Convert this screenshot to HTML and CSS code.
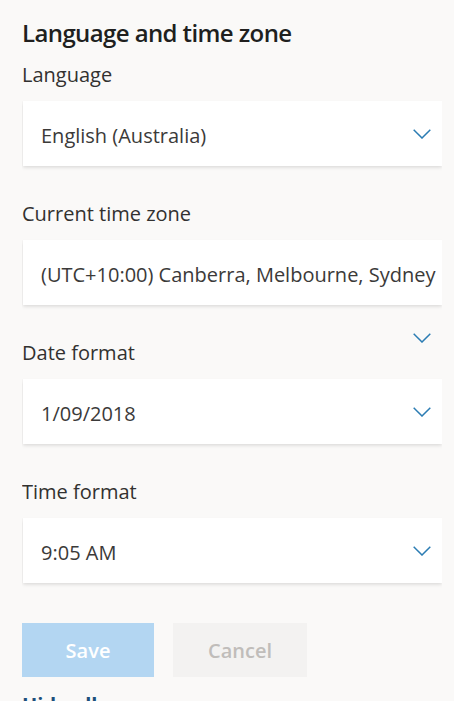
FILE: index.html
```html
<!DOCTYPE html>
<html lang="en">
<head>
<meta charset="utf-8">
<title>Language and time zone</title>
<link rel="stylesheet" href="styles.css">
</head>
<body>
<main class="panel">
  <h2 class="title">Language and time zone</h2>

  <section class="field">
    <div class="label">Language</div>
    <div class="select">
      <span class="value">English (Australia)</span>
      <span class="chev"><svg viewBox="0 0 18 10" width="18" height="10"><polyline points="0.7,0.7 9,9 17.3,0.7"/></svg></span>
    </div>
  </section>

  <section class="field">
    <div class="label">Current time zone</div>
    <div class="select">
      <span class="value">(UTC+10:00) Canberra, Melbourne, Sydney</span>
      <span class="chev"><svg viewBox="0 0 18 10" width="18" height="10"><polyline points="0.7,0.7 9,9 17.3,0.7"/></svg></span>
    </div>
  </section>

  <section class="field">
    <div class="label">Date format</div>
    <div class="select">
      <span class="value">1/09/2018</span>
      <span class="chev"><svg viewBox="0 0 18 10" width="18" height="10"><polyline points="0.7,0.7 9,9 17.3,0.7"/></svg></span>
    </div>
  </section>

  <section class="field">
    <div class="label">Time format</div>
    <div class="select">
      <span class="value">9:05 AM</span>
      <span class="chev"><svg viewBox="0 0 18 10" width="18" height="10"><polyline points="0.7,0.7 9,9 17.3,0.7"/></svg></span>
    </div>
  </section>

  <div class="actions">
    <button class="btn btn-save" type="button">Save</button>
    <button class="btn btn-cancel" type="button">Cancel</button>
  </div>

  <div class="next">Hide all</div>
</main>
</body>
</html>
```

FILE: styles.css
```css
html, body {
  margin: 0;
  padding: 0;
  background: #faf9f8;
}

body {
  font-family: "Open Sans", "Noto Sans", sans-serif;
  color: #323130;
  height: 701px;
  overflow: hidden;
}

.panel {
  margin-left: 22px;
  width: 420px;
  padding-top: 17px;
  overflow: hidden;
}

.title {
  margin: 0;
  font-size: 24px;
  line-height: 32px;
  font-weight: 600;
  letter-spacing: -0.6px;
  color: #201f1e;
}

.field {
  margin-top: 12px;
}

.field + .field {
  margin-top: 34px;
}

.label {
  font-size: 20px;
  line-height: 28px;
  margin-bottom: 12px;
  color: #323130;
}

.select {
  margin-left: 1px;
  height: 65px;
  background: #fff;
  box-shadow: 0 1.6px 3.6px 0 rgba(0, 0, 0, 0.132), 0 0.3px 0.9px 0 rgba(0, 0, 0, 0.108);
  display: flex;
  flex-wrap: wrap;
  align-content: flex-start;
}

.value {
  flex: none;
  white-space: nowrap;
  height: 61px;
  padding-top: 4px;
  padding-left: 18px;
  font-size: 20px;
  line-height: 61px;
  color: #3b3a39;
}

.chev {
  flex: none;
  margin-left: auto;
  height: 65px;
  padding: 0 11px 0 10px;
  display: flex;
  align-items: center;
}

.chev svg {
  display: block;
  fill: none;
  stroke: #2b7cb3;
  stroke-width: 1.5;
}

.actions {
  margin-top: 40px;
  display: flex;
  gap: 19px;
}

.btn {
  height: 54px;
  border: 0;
  padding: 0;
  font-family: inherit;
  font-size: 20px;
  font-weight: 600;
  padding-top: 1px;
}

.btn-save {
  width: 132px;
  background: #b3d6f2;
  color: #fff;
}

.btn-cancel {
  width: 134px;
  background: #f3f2f1;
  color: #c0bdba;
}

.next {
  margin-top: 14px;
  font-size: 20px;
  line-height: 28px;
  font-weight: 700;
  color: #1d4f7c;
}
```
